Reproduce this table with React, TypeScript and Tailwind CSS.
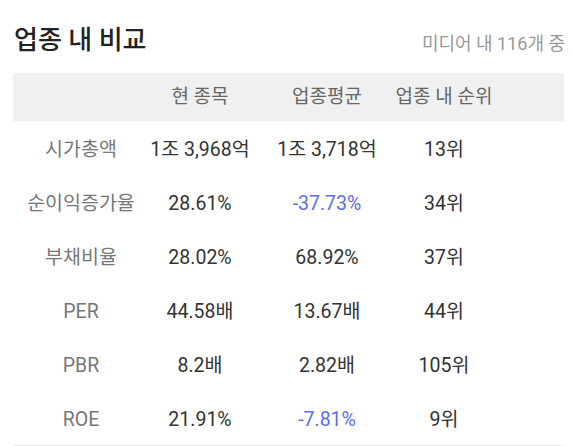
import React from "react"

const rows = [
  { label: "시가총액", cur: "1조 3,968억", avg: "1조 3,718억", rank: "13위" },
  { label: "순이익증가율", cur: "28.61%", avg: "-37.73%", rank: "34위", avgNeg: true },
  { label: "부채비율", cur: "28.02%", avg: "68.92%", rank: "37위" },
  { label: "PER", cur: "44.58배", avg: "13.67배", rank: "44위" },
  { label: "PBR", cur: "8.2배", avg: "2.82배", rank: "105위" },
  { label: "ROE", cur: "21.91%", avg: "-7.81%", rank: "9위", avgNeg: true },
]

const grid = "grid grid-cols-[136px_102px_152px_82px_1fr] items-center whitespace-nowrap"
const cell = "flex justify-center"

export default function App() {
  return (
    <div
      className="w-[573px] h-[446px] bg-white pl-[13px] pr-[9px] pt-[22px]"
      style={{ fontFamily: 'Roboto, "Noto Sans CJK KR", sans-serif' }}
    >
      <div className="flex items-end justify-between pl-[1px]">
        <h1 className="text-[26px] leading-[36px] font-medium text-[#222]">업종 내 비교</h1>
        <span className="text-[18px] text-[#999] mb-[1px] mr-[-1px]">미디어 내 116개 중</span>
      </div>
      <div className={`${grid} mt-[15px] h-[48px] bg-[#f0f0f0] text-[19px] text-[#666]`}>
        <div></div>
        <div className={cell}>현 종목</div>
        <div className={cell}>업종평균</div>
        <div className={cell}>업종 내 순위</div>
        <div></div>
      </div>
      <div className="border-b border-[#ececec]">
        {rows.map((r) => (
          <div key={r.label} className={`${grid} h-[54px] pt-[4px] text-[19.5px]`}>
            <div className={`${cell} text-[#777]`}>{r.label}</div>
            <div className={`${cell} text-[#333]`}>{r.cur}</div>
            <div className={`${cell} ${r.avgNeg ? "text-[#5b6ee8]" : "text-[#333]"}`}>{r.avg}</div>
            <div className={`${cell} text-[#333]`}>{r.rank}</div>
            <div></div>
          </div>
        ))}
      </div>
    </div>
  )
}
